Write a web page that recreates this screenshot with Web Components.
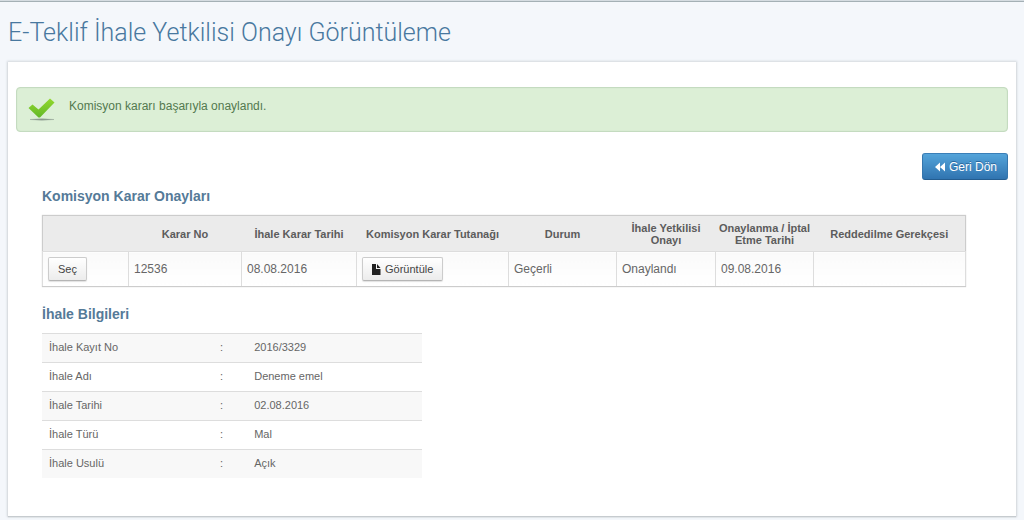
<!DOCTYPE html>
<html lang="tr">
<head>
<meta charset="utf-8">
<title>E-Teklif İhale Yetkilisi Onayı Görüntüleme</title>
<style>
body { margin: 0; background: #f4f7fb; color: #666; font: 12px/16px "Liberation Sans", Arial, sans-serif; }
</style>
</head>
<body>
<tender-page>
  <span slot="title">E-Teklif İhale Yetkilisi Onayı Görüntüleme</span>
  <success-message>Komisyon kararı başarıyla onaylandı.</success-message>
  <button-bar>
    <ui-button variant="primary"><back-icon slot="icon"></back-icon>Geri Dön</ui-button>
  </button-bar>
  <page-section>
    <span slot="heading">Komisyon Karar Onayları</span>
    <decision-table></decision-table>
  </page-section>
  <page-section>
    <span slot="heading">İhale Bilgileri</span>
    <tender-details></tender-details>
  </page-section>
</tender-page>
<script>
const define = (name, html) => {
  const template = document.createElement('template');
  template.innerHTML = html;
  customElements.define(name, class extends HTMLElement {
    constructor() {
      super();
      this.attachShadow({ mode: 'open' }).append(template.content.cloneNode(true));
    }
  });
};

define('tender-page', `
<style>
:host { display: flex; flex-direction: column; box-sizing: border-box; min-height: 100vh; padding: 0 8px 4px; border-top: 1px solid #d5dce1; }
:host::before { content: ""; height: 1px; margin: 0 -8px; background: #a4b0b5; }
h1 { margin: 0; padding: 14px 0 12px; font: 300 25px/34px Roboto, sans-serif; color: #48789f; }
main { flex: 1; padding: 25px 8px 16px; background: #fff; box-shadow: 0 0 2px 1px #d3d8dc, 0 1px 1px #a9b0b4; }
</style>
<h1><slot name="title"></slot></h1>
<main><slot></slot></main>`);

define('success-message', `
<style>
:host { display: flex; align-items: flex-start; box-sizing: border-box; height: 45px; padding: 10px 11px; gap: 14px; background: #dcefd6; border: 1px solid #c4dbc0; border-radius: 4px; box-shadow: inset 0 0 1px #bcd6b4; color: #53794f; }
svg { flex: none; }
</style>
<svg width="27" height="24" viewBox="0 0 27 24" aria-hidden="true">
  <defs><linearGradient id="g" x1="0" y1="0" x2="0" y2="1"><stop offset="0" stop-color="#93d82d"/><stop offset="1" stop-color="#62b828"/></linearGradient></defs>
  <path d="M2 21.500Q13.500 20.200 26 21.500Q13.500 22.800 2 21.500Z" fill="#829286" stroke="#98a99b" stroke-width=".5"/>
  <path d="M.5 10L4.500 6.500L10.500 11.500L22 .5L26.500 4.500L12 19.500H10.500Z" fill="url(#g)"/>
</svg>
<span role="status"><slot></slot></span>`);

define('button-bar', `
<style>:host { display: flex; justify-content: flex-end; padding: 21px 0 7px; }</style>
<slot></slot>`);

define('ui-button', `
<style>
:host { display: inline-flex; }
button { display: flex; align-items: center; gap: 4px; height: 24px; margin: 0; padding: 0 9px; font: 11px/16px "Liberation Sans", Arial, sans-serif; color: #444; background: linear-gradient(#fff, #ececec); border: 1px solid #ccc; border-bottom-color: #b5b5b5; border-radius: 2px; box-shadow: 0 1px 1px #e2e2e2; cursor: pointer; }
:host([variant=primary]) button { height: 27px; padding: 0 10px 0 12px; font-size: 12px; color: #fff; background: linear-gradient(#54a4da, #3074b0); border-color: #3a7fb8 #3576ad #245d90; border-radius: 3px; box-shadow: none; text-shadow: 0 -1px 0 #2a669c; }
</style>
<button type="button"><slot name="icon"></slot><span><slot></slot></span></button>`);

define('back-icon', `
<style>:host, svg { display: block; }</style>
<svg width="10" height="10" viewBox="0 0 10 10" aria-hidden="true"><path d="M5 .5V9.500L0 5ZM10 .5V9.500L5 5Z" fill="#fff"/></svg>`);

define('file-icon', `
<style>:host, svg { display: block; }</style>
<svg width="9" height="11" viewBox="0 0 9 11" aria-hidden="true"><path d="M0 0H4V5H8.500V11H0Z M5 0L8.500 4H5Z" fill="#222"/></svg>`);

define('page-section', `
<style>
:host { display: block; margin: 0 43px 18px 26px; }
h2 { margin: 0 0 10px; font-size: 14px; line-height: 18px; color: #557a98; }
</style>
<h2><slot name="heading"></slot></h2>
<slot></slot>`);

define('decision-table', `
<style>
:host { display: block; }
table { width: 100%; table-layout: fixed; border-collapse: collapse; border: 1px solid #ccc; box-shadow: 0 0 1px #ccc; }
th { height: 36px; padding: 0 2px; box-sizing: border-box; font-size: 11px; line-height: 12px; color: #5c5c5c; background: #ebebeb; }
thead { background: #ebebeb; }
td { height: 35px; box-sizing: border-box; padding: 0 5px; background: linear-gradient(#fafafa, #fff); border: 1px solid #ddd; border-bottom-color: #ccc; }
</style>
<table>
  <colgroup><col style="width:86px"><col style="width:113px"><col style="width:115px"><col style="width:152px"><col style="width:108px"><col style="width:99px"><col style="width:98px"><col style="width:152px"></colgroup>
  <thead><tr><th></th><th scope="col">Karar No</th><th scope="col">İhale Karar Tarihi</th><th scope="col">Komisyon Karar Tutanağı</th><th scope="col">Durum</th><th scope="col">İhale Yetkilisi Onayı</th><th scope="col">Onaylanma / İptal Etme Tarihi</th><th scope="col">Reddedilme Gerekçesi</th></tr></thead>
  <tbody><tr>
    <td><ui-button>Seç</ui-button></td><td>12536</td><td>08.08.2016</td>
    <td><ui-button><file-icon slot="icon"></file-icon>Görüntüle</ui-button></td>
    <td>Geçerli</td><td>Onaylandı</td><td>09.08.2016</td><td></td>
  </tr></tbody>
</table>`);

define('tender-details', `
<style>
:host { display: block; max-width: 380px; }
table { width: 100%; table-layout: fixed; border-collapse: separate; border-spacing: 0; font-size: 11px; }
th, td { height: 29px; box-sizing: border-box; padding: 0 7px 2px; border-top: 1px solid #ddd; font-weight: normal; text-align: left; }
tr:nth-child(odd) > * { background: #f8f8f8; }
th { width: 45%; }
td:nth-child(2) { width: 9%; }
</style>
<table>
  <tbody>
    <tr><th scope="row">İhale Kayıt No</th><td>:</td><td>2016/3329</td></tr>
    <tr><th scope="row">İhale Adı</th><td>:</td><td>Deneme emel</td></tr>
    <tr><th scope="row">İhale Tarihi</th><td>:</td><td>02.08.2016</td></tr>
    <tr><th scope="row">İhale Türü</th><td>:</td><td>Mal</td></tr>
    <tr><th scope="row">İhale Usulü</th><td>:</td><td>Açık</td></tr>
  </tbody>
</table>`);
</script>
</body>
</html>
